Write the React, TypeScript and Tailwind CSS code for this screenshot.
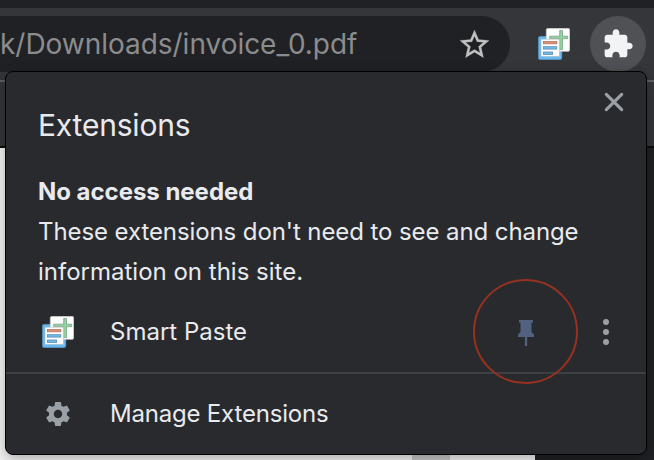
function PasteIcon() {
  return (
    <svg width="32" height="32" viewBox="0 0 32 32" className="block shrink-0">
      <rect x="0.3" y="8.3" width="23.6" height="23.4" rx="2" fill="#69b7ec" stroke="#4a8fc0" strokeWidth="0.5" />
      <rect x="8.2" y="0.2" width="23.6" height="23.2" rx="1.6" fill="#fdfdfd" stroke="#b5b5b5" strokeWidth="0.5" />
      <path d="M21.7 2.5h2.8v5.700h5.200v2.500h-5.200v10.900h-2.800V10.700h-10V8.200h10z" fill="#8fd4a0" stroke="#7f9f87" strokeWidth="0.8" />
      <path d="M3 11.200h18.400v17.200H3z" fill="#fdfdfd" stroke="#a9bac5" strokeWidth="0.6" />
      <rect x="5.4" y="13.4" width="13.4" height="2.400" fill="#ee8a73" stroke="#a87b6f" strokeWidth="0.8" />
      <rect x="5.400" y="18.700" width="13.400" height="2.400" fill="#6cbcf0" stroke="#5f8cab" strokeWidth="0.8" />
      <rect x="5.400" y="24" width="9.200" height="2.400" fill="#6cbcf0" stroke="#5f8cab" strokeWidth="0.8" />
    </svg>
  );
}

function Toolbar() {
  return (
    <div className="flex h-[72px] items-start bg-[#35363a] pt-2">
      <div className="flex h-14 w-[510px] shrink-0 items-center justify-between rounded-r-full bg-[#202124] pr-[18px]">
        <span className="whitespace-nowrap text-[28px] leading-8 tracking-[-0.03px] text-[#8b8c8e]">k/Downloads/invoice_0.pdf</span>
        <svg width="35" height="35" viewBox="0 0 24 24" fill="#c1c1c1" stroke="#c1c1c1" strokeWidth="0.15" className="block">
          <path d="M22 9.24l-7.19-.62L12 2 9.19 8.63 2 9.24l5.46 4.73L5.82 21 12 17.27 18.18 21l-1.63-7.03L22 9.24zM12 15.4l-3.76 2.27 1-4.28-3.32-2.88 4.38-.38L12 6.1l1.71 4.04 4.38.38-3.32 2.88 1 4.28L12 15.4z" />
        </svg>
      </div>
      <div className="ml-7 mt-3">
        <PasteIcon />
      </div>
      <div className="ml-5 flex size-14 items-center justify-center rounded-full bg-[#505154]">
        <svg width="32" height="32" viewBox="0 0 24 24" fill="#f1f3f4" className="block">
          <path d="M20.5 11H19V7c0-1.100-.9-2-2-2h-4V3.500C13 2.120 11.880 1 10.500 1S8 2.120 8 3.500V5H4c-1.100 0-1.990.9-1.990 2v3.800H3.500c1.490 0 2.700 1.210 2.700 2.700s-1.210 2.700-2.700 2.700H2V20c0 1.100.9 2 2 2h3.800v-1.500c0-1.490 1.210-2.700 2.700-2.700 1.490 0 2.700 1.210 2.700 2.700V22H17c1.100 0 2-.9 2-2v-4h1.500c1.380 0 2.500-1.120 2.500-2.500S21.880 11 20.500 11z" />
        </svg>
      </div>
    </div>
  );
}

function ExtensionsPopup() {
  return (
    <div className="absolute left-[5px] top-[71px] flex h-96 w-[642px] flex-col rounded-lg border border-black bg-[#292a2d] text-[#e8eaed] shadow-[0_4px_14px_rgba(0,0,0,0.3)]">
      <div className="flex h-[100px] shrink-0 justify-between pl-8 pr-[22px]">
        <h1 className="whitespace-nowrap pt-[33px] text-[30px] leading-10 tracking-[-0.2px]">Extensions</h1>
        <svg width="20" height="20" viewBox="0 0 20 20" stroke="#9aa0a6" strokeWidth="3.1" strokeLinecap="round" className="mt-5 block">
          <path d="M2.300 2.300l15.400 15.400M17.700 2.300L2.300 17.700" />
        </svg>
      </div>
      <div className="h-[120px] shrink-0 whitespace-nowrap pl-8 text-2xl leading-10 tracking-[-0.09px]">
        <h2 className="font-bold tracking-[-0.03px]">No access needed</h2>
        <p>These extensions don't need to see and change</p>
        <p className="tracking-normal">information on this site.</p>
      </div>
      <div className="flex h-[82px] shrink-0 items-center border-b-2 border-[#3c4043] pl-9 pr-[37px]">
        <PasteIcon />
        <span className="ml-9 grow whitespace-nowrap text-2xl">Smart Paste</span>
        <div className="relative mr-[69px] mt-0.5 flex h-[26px] w-4 justify-center">
          <svg width="16" height="26" viewBox="0 0 16 26" fill="#51617f" className="block">
            <path d="M1 0h14v2.500h-1.500V12L16 14.500V17H9.200v9H6.900v-9H0v-2.500L2.500 12V2.500H1z" />
          </svg>
          <div className="absolute left-[-45.5px] top-[-41.5px] size-[105px] rounded-full border-2 border-[#96321f]" />
        </div>
        <div className="flex flex-col gap-1">
          <i className="size-1.5 rounded-full bg-[#9aa0a6]" />
          <i className="size-1.5 rounded-full bg-[#9aa0a6]" />
          <i className="size-1.5 rounded-full bg-[#9aa0a6]" />
        </div>
      </div>
      <div className="flex grow items-center pl-10">
        <svg width="24" height="24" viewBox="2 2 20 20" fill="#9aa0a6" className="block">
          <path d="M19.43 12.98c.04-.32.07-.64.07-.98s-.03-.66-.07-.98l2.11-1.650c.19-.15.24-.42.12-.64l-2-3.460c-.12-.22-.39-.3-.61-.22l-2.490 1c-.52-.4-1.080-.73-1.690-.98l-.38-2.650C14.460 2.180 14.250 2 14 2h-4c-.25 0-.46.18-.49.42l-.38 2.650c-.61.25-1.170.59-1.690.98l-2.490-1c-.23-.09-.49 0-.61.22l-2 3.460c-.13.22-.07.49.12.64l2.110 1.650c-.04.32-.07.65-.07.98s.03.66.07.98l-2.110 1.650c-.19.15-.24.42-.12.64l2 3.460c.12.22.39.3.61.22l2.490-1c.52.4 1.080.73 1.690.98l.38 2.650c.03.24.24.42.49.42h4c.25 0 .46-.18.49-.42l.38-2.650c.61-.25 1.170-.59 1.690-.98l2.490 1c.23.09.49 0 .61-.22l2-3.460c.12-.22.07-.49-.12-.64l-2.110-1.650zM12 15.500c-1.930 0-3.500-1.570-3.500-3.500s1.570-3.500 3.500-3.500 3.500 1.570 3.500 3.500-1.570 3.500-3.500 3.500z" />
        </svg>
        <span className="ml-10 whitespace-nowrap text-2xl tracking-[-0.2px]">Manage Extensions</span>
      </div>
    </div>
  );
}

export default function App() {
  return (
    <div className="relative flex h-[460px] w-[654px] flex-col overflow-hidden bg-[#202124] font-['Inter','Liberation_Sans',sans-serif]">
      <div className="h-2 shrink-0" />
      <Toolbar />
      <div className="h-[68px] shrink-0 border-b-2 border-t-2 border-b-[#0c0c0d] border-t-[#5f6064] bg-[#35363a]" />
      <div className="flex grow">
        <div className="flex w-[535px] items-end bg-[#f4f4f4]">
          <div className="ml-[412px] h-12 w-[38px] bg-[#c8c8c8]" />
        </div>
      </div>
      <ExtensionsPopup />
    </div>
  );
}
